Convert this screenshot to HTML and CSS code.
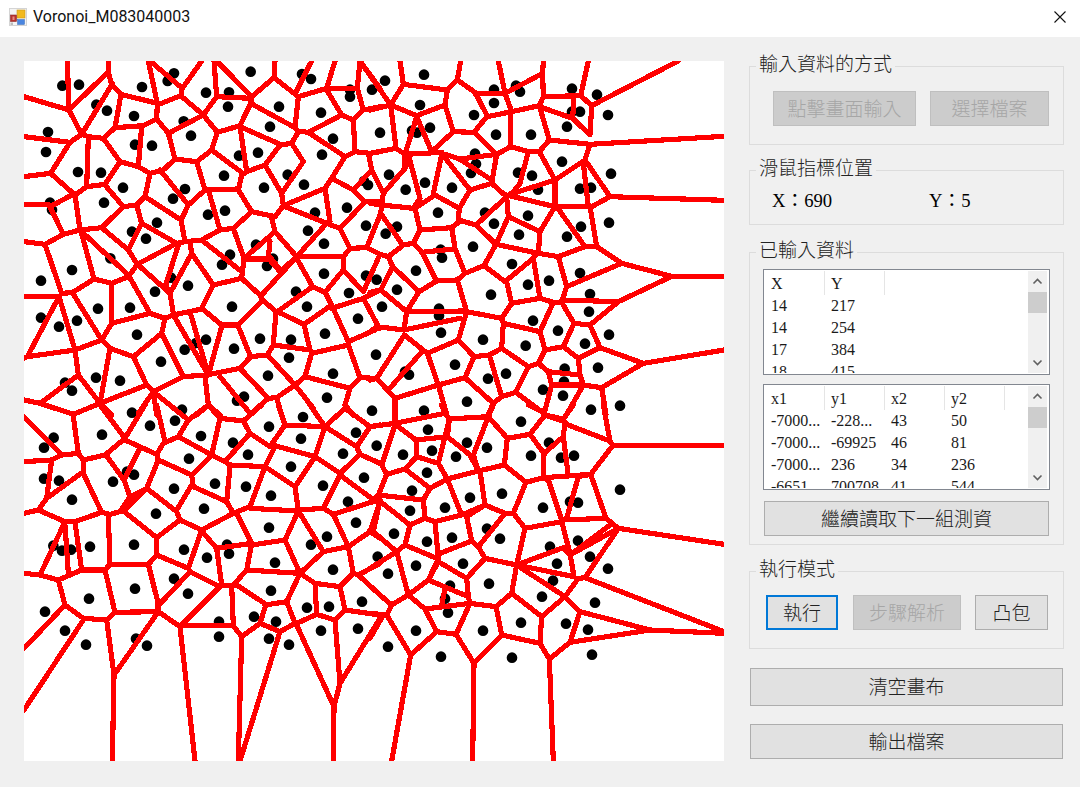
FILE: index.html
```html
<!DOCTYPE html>
<html lang="zh-Hant">
<head>
<meta charset="utf-8">
<title>Voronoi_M083040003</title>
<link rel="stylesheet" href="styles.css">
</head>
<body>
<div class="window">
  <header class="titlebar">
    <svg class="app-icon" viewBox="0 0 18 18" aria-hidden="true">
      <rect width="18" height="18" fill="#d4d4d4"/>
      <rect x="1" y="1" width="16" height="16" fill="#f4f4f4"/>
      <rect x="8" y="2" width="8" height="8" fill="#f2b91e" stroke="#c9971a" stroke-width=".6"/>
      <rect x="1.5" y="7" width="6" height="6.5" fill="#b8322e" stroke="#8c2b2b" stroke-width=".6"/>
      <rect x="3.5" y="8.5" width="2" height="3.5" fill="#e58c80"/>
      <rect x="8.5" y="11.5" width="7" height="5" fill="#4a86e0" stroke="#3b6db8" stroke-width=".5"/>
      <rect x="1.5" y="14.5" width="2.5" height="2.5" fill="#bdbdbd"/>
    </svg>
    <span class="title">Voronoi_M083040003</span>
    <svg class="close-icon" viewBox="0 0 12 12" aria-hidden="true">
      <path d="M.5.5l11 11M11.5.5l-11 11" fill="none" stroke="#111" stroke-width="1.1"/>
    </svg>
  </header>

  <main class="content">
    <svg class="canvas" viewBox="0 0 700 700" width="700" height="700" role="img" aria-label="Voronoi diagram">
      <g class="dots">
        <path transform="translate(-4 -6) scale(.33333)" d="M127 92h0M177 89h0M462 55h0M443 78h0M366 96h0M692 50h0M558 113h0M627 112h0M846 57h0M873 72h0M990 104h0M990 125h0M1056 104h0M229 149h0M261 167h0M342 183h0M624 155h0M777 155h0M903 173h0M84 231h0M78 291h0M491 199h0M513 242h0M750 215h0M939 251h0M345 269h0M396 272h0M657 302h0M714 293h0M906 299h0M174 351h0M243 353h0M612 362h0M803 359h0M852 389h0M1032 378h0M1044 390h0M309 398h0M495 402h0M732 398h0M459 431h0M252 443h0M90 443h0M96 464h0M615 467h0M885 473h0M981 458h0M564 479h0M411 503h0M1038 512h0M336 530h0M864 527h0M378 551h0M912 566h0M708 569h0M630 599h0M759 611h0M606 629h0M741 633h0M271 610h0M156 645h0M63 677h0M912 656h0M1038 662h0M1070 674h0M453 668h0M504 692h0M405 710h0M828 710h0M987 714h0M234 761h0M330 758h0M636 755h0M861 755h0M63 788h0M171 797h0M117 815h0M1014 791h0M351 839h0M915 836h0M558 854h0M528 864h0M720 851h0M813 854h0M642 881h0M494 884h0M807 908h0M1068 899h0M423 920h0M939 956h0M228 968h0M744 962h0M300 977h0M135 983h0M156 1007h0M921 1028h0M672 1025h0M651 1037h0M486 1064h0M336 1073h0M1056 1067h0"/>
        <path transform="translate(346 -6) scale(.33333)" d="M45 77h0M162 59h0M372 104h0M438 92h0M450 110h0M606 101h0M681 119h0M150 150h0M372 144h0M312 180h0M606 170h0M630 170h0M714 180h0M30 233h0M180 218h0M126 227h0M141 233h0M591 215h0M378 239h0M483 239h0M315 296h0M318 327h0M576 320h0M57 359h0M303 354h0M444 353h0M486 362h0M723 356h0M165 383h0M107 404h0M246 398h0M504 404h0M630 401h0M663 398h0M204 473h0M345 473h0M474 482h0M717 503h0M81 515h0M372 506h0M633 515h0M47 536h0M447 539h0M591 545h0M309 575h0M212 584h0M216 608h0M426 627h0M138 647h0M630 654h0M537 677h0M474 689h0M81 704h0M660 717h0M363 719h0M36 755h0M207 761h0M207 782h0M657 770h0M489 797h0M213 833h0M564 827h0M717 839h0M339 854h0M645 866h0M467 872h0M255 929h0M684 938h0M584 941h0M582 980h0M117 959h0M105 950h0M408 956h0M354 971h0M519 1004h0M579 1022h0M291 1040h0M162 1067h0M663 1064h0M750 1052h0"/>
        <path transform="translate(-4 344) scale(.33333)" d="M849 36h0M101 98h0M72 128h0M246 89h0M390 62h0M465 47h0M543 93h0M747 65h0M843 101h0M1008 83h0M639 113h0M684 149h0M507 161h0M813 185h0M969 146h0M1070 122h0M321 200h0M342 209h0M279 230h0M72 221h0M117 227h0M156 284h0M462 251h0M585 236h0M678 245h0M753 272h0M909 242h0M1032 218h0M984 290h0M552 311h0M408 326h0M1008 353h0M747 368h0M921 395h0M873 419h0M342 419h0M210 425h0M100 422h0M126 437h0M153 434h0M492 434h0M621 419h0M627 446h0M561 458h0M765 473h0M1073 455h0M939 494h0M462 521h0M345 551h0M753 557h0M504 566h0M207 581h0M1026 590h0M861 608h0M927 605h0M702 635h0M768 650h0M597 650h0M75 620h0M135 677h0M903 677h0M1014 671h0M747 701h0M807 719h0M597 695h0M348 701h0M381 722h0M198 719h0"/>
        <path transform="translate(346 344) scale(.33333)" d="M453 50h0M174 74h0M291 113h0M351 128h0M537 113h0M99 149h0M186 137h0M258 155h0M483 152h0M573 158h0M612 152h0M171 203h0M126 257h0M750 254h0M396 266h0M300 278h0M225 308h0M120 317h0M519 308h0M600 290h0M624 293h0M72 386h0M246 398h0M171 410h0M351 371h0M390 401h0M540 425h0M624 407h0M660 455h0M138 482h0M279 476h0M561 476h0M714 491h0M54 506h0M357 536h0M549 527h0M240 542h0M225 581h0M516 575h0M675 593h0M234 623h0M588 656h0M453 653h0M654 674h0M138 677h0M339 677h0M54 725h0M213 755h0M426 758h0M666 749h0"/>
      </g>
      <g class="edges">
        <path transform="translate(-4 -6) scale(.33333)" d="M142 18L147 165L265 50L265 18M265 50L275 90L303 118L412 145L385 18M390 18L487 100L482 122L412 150M545 18L487 100M12 125L147 165L185 238L278 85M303 118L285 218L250 250L205 245L185 238M285 218L370 212L410 192L412 145M12 245L150 262L185 238M150 262L92 355L12 365M205 245L200 395M92 355L165 420L200 395L255 388L300 320L250 250M300 320L355 335L390 355L430 345L465 312L445 235L410 192M365 215L355 335M482 122L550 180L590 125L582 18M590 18L695 125M590 125L692 130M765 18L762 68L695 125L692 145L660 212L592 232L550 180L445 235M692 145L825 218L835 125L762 68M875 18L825 118M835 125L920 100L945 18M920 100L1012 100L1020 18L1080 100M1012 100L1030 165L1000 195L965 180L920 105M965 180L865 232L832 228L825 218M865 232L975 305L1005 290L1000 195M1005 290L1050 295L1080 290M1030 165L1080 155M975 305L935 370L915 400L790 452L785 415L850 320L815 265L835 230M815 265L780 270L735 330L680 350L660 215L785 270M735 330L785 415M680 350L665 360L655 405L695 470L765 485L790 452M665 352L575 285L530 320L465 312M575 285L592 232M530 320L555 405L655 402M555 405L505 450L420 345M505 450L483 495L375 425L390 355M375 425L350 450L310 455L255 390M310 455L245 518L180 525L165 420M180 525L130 538L90 455L165 415M12 448L90 450M130 538L75 568L12 560M75 568L125 715L157 713L222 672L182 525M185 530L325 660L390 775L435 790L460 780L545 762M245 518L325 585L352 628L450 715L460 775M350 450L365 505L325 585M365 505L470 565M483 495L495 560L470 565L352 628L325 665L275 685L222 672M495 560L545 555L600 525L565 405M600 525L640 520L695 470M640 520L672 610L665 670L580 690L515 595L510 560M545 555L665 650M475 570L437 690L450 715M515 595L450 715M580 690L545 760L605 810L655 810L725 740L722 722L665 670M672 610L765 530L755 490M765 530L830 605L780 650L745 610L750 558M745 612L680 612M745 600L785 650M830 605L920 505L960 520L990 580L970 605L830 605M990 580L1040 578L1080 598M920 505L795 455M830 610L878 695L915 712L970 645L970 605M970 645L1030 710L1080 598M1030 730L1080 705M830 605L725 720M878 695L772 770L852 808L935 750L915 712M935 760L1030 730L1078 820M935 750L985 860L1065 825M985 870L1020 968L1068 970M985 870L875 895L855 965L990 1000L975 1050L1000 1080M852 808L870 885L760 870L768 770L728 735M760 870L742 900L692 905L655 815M605 815L565 960L510 770M742 900L825 990L855 965M692 905L660 940L560 960L490 965L425 835L340 905L270 880L245 855L165 885L117 725L12 725M117 725L22 905L165 885M22 905L12 910M245 855L157 713M245 855L275 805L275 685M275 805L390 775M425 835L435 790M460 780L565 960M270 880L240 1045L175 960L165 885M340 905L380 990L400 1010L490 965M380 990L240 1045M175 960L60 1045L12 1035M60 1045L160 1078L240 1045L275 1080M400 1010L355 1075M400 1010L410 1080M555 965L565 1050L530 1080M565 1050L600 1080M600 965L690 1075M660 940L745 1030L770 1028L825 990M745 1030L690 1078M770 1028L785 1080M825 990L880 1060M990 1000L1020 970M1000 405L935 370M1000 405L1055 345L1045 295M1000 405L1035 440L1080 440M915 400L930 500M1035 440L965 515M1082 475L1040 578"/>
        <path transform="translate(346 -6) scale(.33333)" d="M30 598L55 605M90 18L100 88L62 150L0 165M100 88L232 105L262 75L272 18M232 105L225 150L140 182L62 150M-30 18L62 150L78 280L0 295M78 280L105 298L140 185L185 290L250 230L225 150M250 230L312 232L352 183L315 112L262 75M385 18L405 115L315 115M405 115L518 55L520 18M405 115L425 170L352 185M425 170L508 152L520 125L518 55M520 125L632 122L665 152L660 240L608 190L612 122M655 18L632 122M665 152L925 18M508 155L608 190M508 152L538 255L660 268L1062 244M538 255L508 290L475 290L422 275L422 170M422 275L380 298L312 232M508 290L555 375L645 315L660 268M475 290L450 385L430 410L410 425L365 385L380 298L270 312L215 295L300 405L365 385M105 298L215 292M265 310L365 375M555 375L555 455L410 420M555 375L430 415M645 315L720 425L1062 436M640 325L655 455L660 458L720 425M555 455L660 455L680 575L645 575L560 455M555 455L510 530L415 485L410 425L318 510L265 495L268 460L300 405M268 460L195 420L135 460L150 525L130 565L98 570L32 475L40 415L105 340L118 310M118 310L150 430L130 460L35 450L0 445M215 300L190 415M40 415L5 345M105 340L105 300M150 525L245 518L268 500M245 518L255 580L285 655L342 632L378 568L318 510M415 485L378 568L505 595L510 530M505 590L490 610L405 680L342 632M490 610L510 730L425 745L410 680M505 595L565 605L645 575M565 605L590 695L575 742L550 742L510 730M645 575L680 575L755 625L905 664L1062 664M755 625L590 695M905 664L745 740L575 735M745 740L660 810L612 805L575 742M660 810L690 878L820 925L1062 885M690 878L625 910L580 875L612 805M550 742L510 830L525 885L580 875M510 830L400 805L395 790L290 770M285 655L262 675L290 770M262 675L200 678L155 590L130 565M155 592L250 582M200 678L147 710L68 635L55 605L98 572M147 710L110 770L290 768M110 770L102 825L270 790M102 825L20 815L0 830M68 635L32 705L0 712M32 705L110 770M290 770L265 855L172 895L103 840M265 855L312 905L358 900L395 880L400 805M425 745L395 790M395 880L475 935L505 925L525 885M505 925L535 950L630 960L625 910M535 950L545 990L522 1078M545 990L640 990L590 1078M630 960L640 990L695 998L820 925M695 998L708 1078M475 935L437 1012L395 1025L358 900M437 1012L522 1075M395 1025L370 1045L285 968L312 905M370 1045L355 1078M285 968L205 990L172 895M205 990L230 1078M205 990L75 1030L20 970L103 840M160 885L55 1005M75 1030L75 1078M20 970L0 975"/>
        <path transform="translate(-4 344) scale(.33333)" d="M12 35L125 150L175 145L190 165L255 150L315 100L240 0M160 35L175 145M12 170L95 165L125 150M95 165L80 280L190 200L190 165M80 280L55 315L12 325M55 315L135 350L165 350L245 322L270 328L300 320L330 275L312 225L258 150M245 322L190 205M312 225L360 130M315 105L410 148L430 115L475 95L575 150L600 40L565 0M375 0L315 100M410 0L435 110M400 -40L505 45L475 95M505 45L565 0M600 40L670 48L725 0M670 48L690 85L750 125L795 60L775 0M690 85L615 170L575 150M795 60L915 65L870 0M915 65L1010 125L1050 65L975 10L920 60M1050 65L1080 60M1010 125L1020 148L1080 175M1020 148L960 205L885 155L915 65M885 155L825 245L735 185L765 125L750 125M765 122L885 155M735 185L630 180L615 170M735 185L690 305L640 325L620 290L630 185M620 290L520 245L515 210L575 150M515 210L415 165L380 250L330 275M415 165L410 148M380 250L470 320L480 345L410 398L310 318L380 250M515 240L470 315M480 345L545 375L640 325M545 375L505 490L410 450L410 398M410 450L385 478L270 478L265 330M270 478L255 495L185 495L165 352M135 350L60 510L12 505M135 360L145 505M60 510L115 525L180 497M115 525L135 600L12 730M135 600L190 640L260 645L285 622L255 495M190 645L12 915M260 645L282 810L415 620L285 622M415 620L412 585L385 478M412 605L510 500L505 490M510 500L600 545L480 665L415 620M282 810L277 1068M480 665L525 1068M480 662L640 662L665 695L720 655L738 598L650 540L635 543L605 540L590 430L545 378M635 543L640 662M590 430L695 415L650 325M695 415L680 495L640 540M695 420L795 405L835 318L690 310M835 315L825 245M795 405L840 505L680 495M840 505L800 590L735 600M800 590L825 655L780 680L720 655M840 505L885 535L960 545L1000 505L985 425L910 440L835 318M910 440L840 505M835 315L910 310L940 328L985 425L1050 380L1080 290L1065 288L960 210L910 310M940 328L1065 288M1050 380L1080 400M1000 505L1015 510L1080 475M1015 510L1080 570M960 545L975 615L1080 630M975 615L945 645L890 628L885 535M890 628L830 655M945 645L960 835M830 660L942 905L960 835L1080 640M942 905L940 1068M665 695L655 1068M780 680L660 1068"/>
        <path transform="translate(346 344) scale(.33333)" d="M30 570L65 600M75 0L75 55L225 25L238 42L355 35L370 0M0 65L75 55M225 25L215 0M355 35L412 100L480 88L522 145L580 95L585 50L525 30L480 88M525 30L580 42L610 0M475 0L520 22M530 0L520 25M585 50L595 60L720 108L700 0M720 108L728 122L1062 122M728 122L662 208L595 213L580 95M595 213L520 218L522 145M662 208L625 215L590 340M662 208L708 340L745 370L1062 418M708 340L575 345L535 225L520 218L468 232L403 180L412 100M403 180L325 198L300 150L232 95L138 105L75 58M232 95L238 42L205 175L140 155L138 105M355 35L310 150L325 198M140 155L105 192L50 208L35 180L75 60M105 192L180 250L232 222L205 175M232 222L325 198M232 222L275 330L195 350L165 340L160 285L180 250M160 285L25 270L50 208M25 270L0 290M25 285L120 360L165 340M120 360L105 420L205 462L195 350M275 330L345 300L330 198M345 300L405 325L430 325L468 232M430 325L465 370L575 350M465 370L440 480L345 460L325 425L405 325M345 300L290 335L305 408L210 445M325 425L305 408M105 420L80 440L115 570L175 525L205 470L290 520L345 460M80 440L10 380L30 285M10 380L0 375M80 440L0 490M205 462L175 525L295 575L290 520M295 575L300 595L165 612L115 570M300 595L378 605L425 565L440 480M300 595L258 688L312 775L395 690L378 605M225 550L215 600M165 612L200 680L258 688M200 680L122 750L50 630L65 600L115 570M50 630L0 625M40 630L0 700M122 750L65 1068M312 775L308 1068M395 690L510 715L515 635L425 565M510 715L538 762L600 712L630 620L585 575L515 635M585 575L625 520L645 518L1062 680M440 480L585 575M440 480L612 515L600 445M440 480L580 428L600 450L745 370M575 350L600 445M600 450L720 360M538 762L550 1068M600 712L840 675L1062 685M630 620L840 675M645 518L745 370"/>
      </g>
    </svg>

    <aside class="panel">
      <section class="group group-input">
        <h2 class="legend">輸入資料的方式</h2>
        <div class="btn-row">
          <button class="btn disabled w143" disabled>點擊畫面輸入</button>
          <button class="btn disabled w119" disabled>選擇檔案</button>
        </div>
      </section>

      <section class="group group-mouse">
        <h2 class="legend">滑鼠指標位置</h2>
        <div class="coords">
          <span class="coord-x">X：690</span>
          <span>Y：5</span>
        </div>
      </section>

      <section class="group group-data">
        <h2 class="legend">已輸入資料</h2>
        <div class="list">
          <div class="rows">
            <div class="row head"><span>X</span><span>Y</span></div>
            <div class="row"><span>14</span><span>217</span></div>
            <div class="row"><span>14</span><span>254</span></div>
            <div class="row"><span>17</span><span>384</span></div>
            <div class="row"><span>18</span><span>415</span></div>
          </div>
          <div class="scrollbar">
            <svg class="arrow" viewBox="0 0 19 21" aria-hidden="true"><path d="M5.5 12.5l4-4 4 4" fill="none" stroke="#606060" stroke-width="1.6"/></svg>
            <div class="thumb"></div>
            <svg class="arrow arrow-down" viewBox="0 0 19 21" aria-hidden="true"><path d="M5.5 8.5l4 4 4-4" fill="none" stroke="#606060" stroke-width="1.6"/></svg>
          </div>
        </div>
        <div class="list">
          <div class="rows">
            <div class="row head"><span>x1</span><span>y1</span><span>x2</span><span>y2</span></div>
            <div class="row"><span>-7000...</span><span>-228...</span><span>43</span><span>50</span></div>
            <div class="row"><span>-7000...</span><span>-69925</span><span>46</span><span>81</span></div>
            <div class="row"><span>-7000...</span><span>236</span><span>34</span><span>236</span></div>
            <div class="row"><span>-6651</span><span>700708</span><span>41</span><span>544</span></div>
          </div>
          <div class="scrollbar">
            <svg class="arrow" viewBox="0 0 19 21" aria-hidden="true"><path d="M5.5 12.5l4-4 4 4" fill="none" stroke="#606060" stroke-width="1.6"/></svg>
            <div class="thumb"></div>
            <svg class="arrow arrow-down" viewBox="0 0 19 21" aria-hidden="true"><path d="M5.5 8.5l4 4 4-4" fill="none" stroke="#606060" stroke-width="1.6"/></svg>
          </div>
        </div>
        <button class="btn next">繼續讀取下一組測資</button>
      </section>

      <section class="group group-mode">
        <h2 class="legend">執行模式</h2>
        <div class="btn-row">
          <button class="btn focus w72">執行</button>
          <button class="btn disabled w108" disabled>步驟解析</button>
          <button class="btn w73">凸包</button>
        </div>
      </section>

      <button class="btn wide clear">清空畫布</button>
      <button class="btn wide export">輸出檔案</button>
    </aside>
  </main>
</div>
</body>
</html>
```

FILE: styles.css
```css
* { box-sizing: border-box; }

html, body {
  margin: 0;
  padding: 0;
  height: 100%;
  overflow: hidden;
}

body {
  background: #f0f0f0;
  font-family: "Liberation Serif", "Noto Sans CJK TC", serif;
  color: #000;
}

.window {
  width: 1080px;
  height: 787px;
  display: flex;
  flex-direction: column;
  background: #f0f0f0;
}

.titlebar {
  height: 37px;
  flex: none;
  display: flex;
  align-items: center;
  padding: 0 14px 4px 9px;
  background: #fff;
}

.app-icon {
  width: 18px;
  height: 18px;
  flex: none;
}

.title {
  margin-left: 6px;
  font: 16px/20px Roboto, "Open Sans", sans-serif;
  color: #111;
}

.close-icon {
  width: 12px;
  height: 12px;
  margin-left: auto;
}

.content {
  flex: 1;
  display: flex;
  gap: 25px;
  padding: 24px 0 0 24px;
}

.canvas {
  flex: none;
  display: block;
  background: #fff;
  overflow: hidden;
}

.dots path {
  fill: none;
  stroke: #000;
  stroke-width: 32;
  stroke-linecap: round;
}

.edges path {
  fill: none;
  stroke: #f00;
  stroke-width: 15.5;
  stroke-linejoin: round;
  stroke-linecap: round;
  shape-rendering: crispEdges;
}

.panel {
  width: 315px;
  flex: none;
  display: flex;
  flex-direction: column;
  padding-top: 5px;
}

.group {
  position: relative;
  width: 315px;
  border: 1px solid #dcdcdc;
}

.group-input { height: 79px; padding: 24px 0 0 23px; margin-bottom: 25px; }
.group-mouse { height: 55px; padding: 18px 0 0 22px; margin-bottom: 27px; }
.group-data  { height: 293px; padding: 16px 0 0 13px; margin-bottom: 26px; }
.group-mode  { height: 78px; padding: 23px 0 0 16px; margin-bottom: 19px; }

.legend {
  position: absolute;
  top: -13px;
  left: 6px;
  margin: 0;
  padding: 0 3px;
  background: #f0f0f0;
  font-size: 19px;
  font-weight: 300;
  line-height: 22px;
  color: #222;
  white-space: nowrap;
}

.btn-row {
  display: flex;
  gap: 14px;
}

.btn {
  height: 35px;
  padding: 2px 0 0;
  border: 1px solid #adadad;
  background: #e1e1e1;
  color: #222;
  font: inherit;
  font-size: 19px;
  font-weight: 300;
  line-height: 1;
  flex: none;
}

.btn.disabled {
  background: #cccccc;
  border-color: #bfbfbf;
  color: #a6a6a6;
}

.btn.focus {
  border: 2px solid #0078d7;
  margin-right: 1px;
}

.w143 { width: 143px; }
.w119 { width: 119px; }
.w72  { width: 72px; }
.w108 { width: 108px; }
.w73  { width: 73px; }

.coords {
  display: flex;
  font-size: 18.67px;
  line-height: 24px;
}

.coord-x { width: 157px; }

.list {
  width: 287px;
  height: 106px;
  margin-bottom: 9px;
  display: flex;
  justify-content: space-between;
  border: 1px solid #828790;
  background: #fff;
  padding: 1px 2px 1px 1px;
  overflow: hidden;
}

.rows {
  flex: 1;
  overflow: hidden;
  font-size: 16px;
  color: #1a1a1a;
}

.row {
  display: flex;
  height: 22px;
  line-height: 22px;
}

.row span {
  width: 60px;
  padding-left: 6px;
  white-space: nowrap;
  overflow: hidden;
}

.row.head {
  height: 24px;
  line-height: 25px;
}

.row.head span {
  border-right: 1px solid #e5e5e5;
}

.scrollbar {
  width: 19px;
  flex: none;
  display: flex;
  flex-direction: column;
  background: #f0f0f0;
}

.arrow {
  width: 19px;
  height: 21px;
  display: block;
  flex: none;
}

.arrow-down { margin-top: auto; }

.thumb {
  height: 21px;
  flex: none;
  background: #cdcdcd;
}

.next {
  display: block;
  width: 285px;
  margin: 11px 0 0 1px;
}

.wide { width: 313px; margin-left: 1px; padding-top: 0; }
.clear { height: 38px; margin-bottom: 18px; }
.export { height: 35px; padding-top: 2px; }
```
